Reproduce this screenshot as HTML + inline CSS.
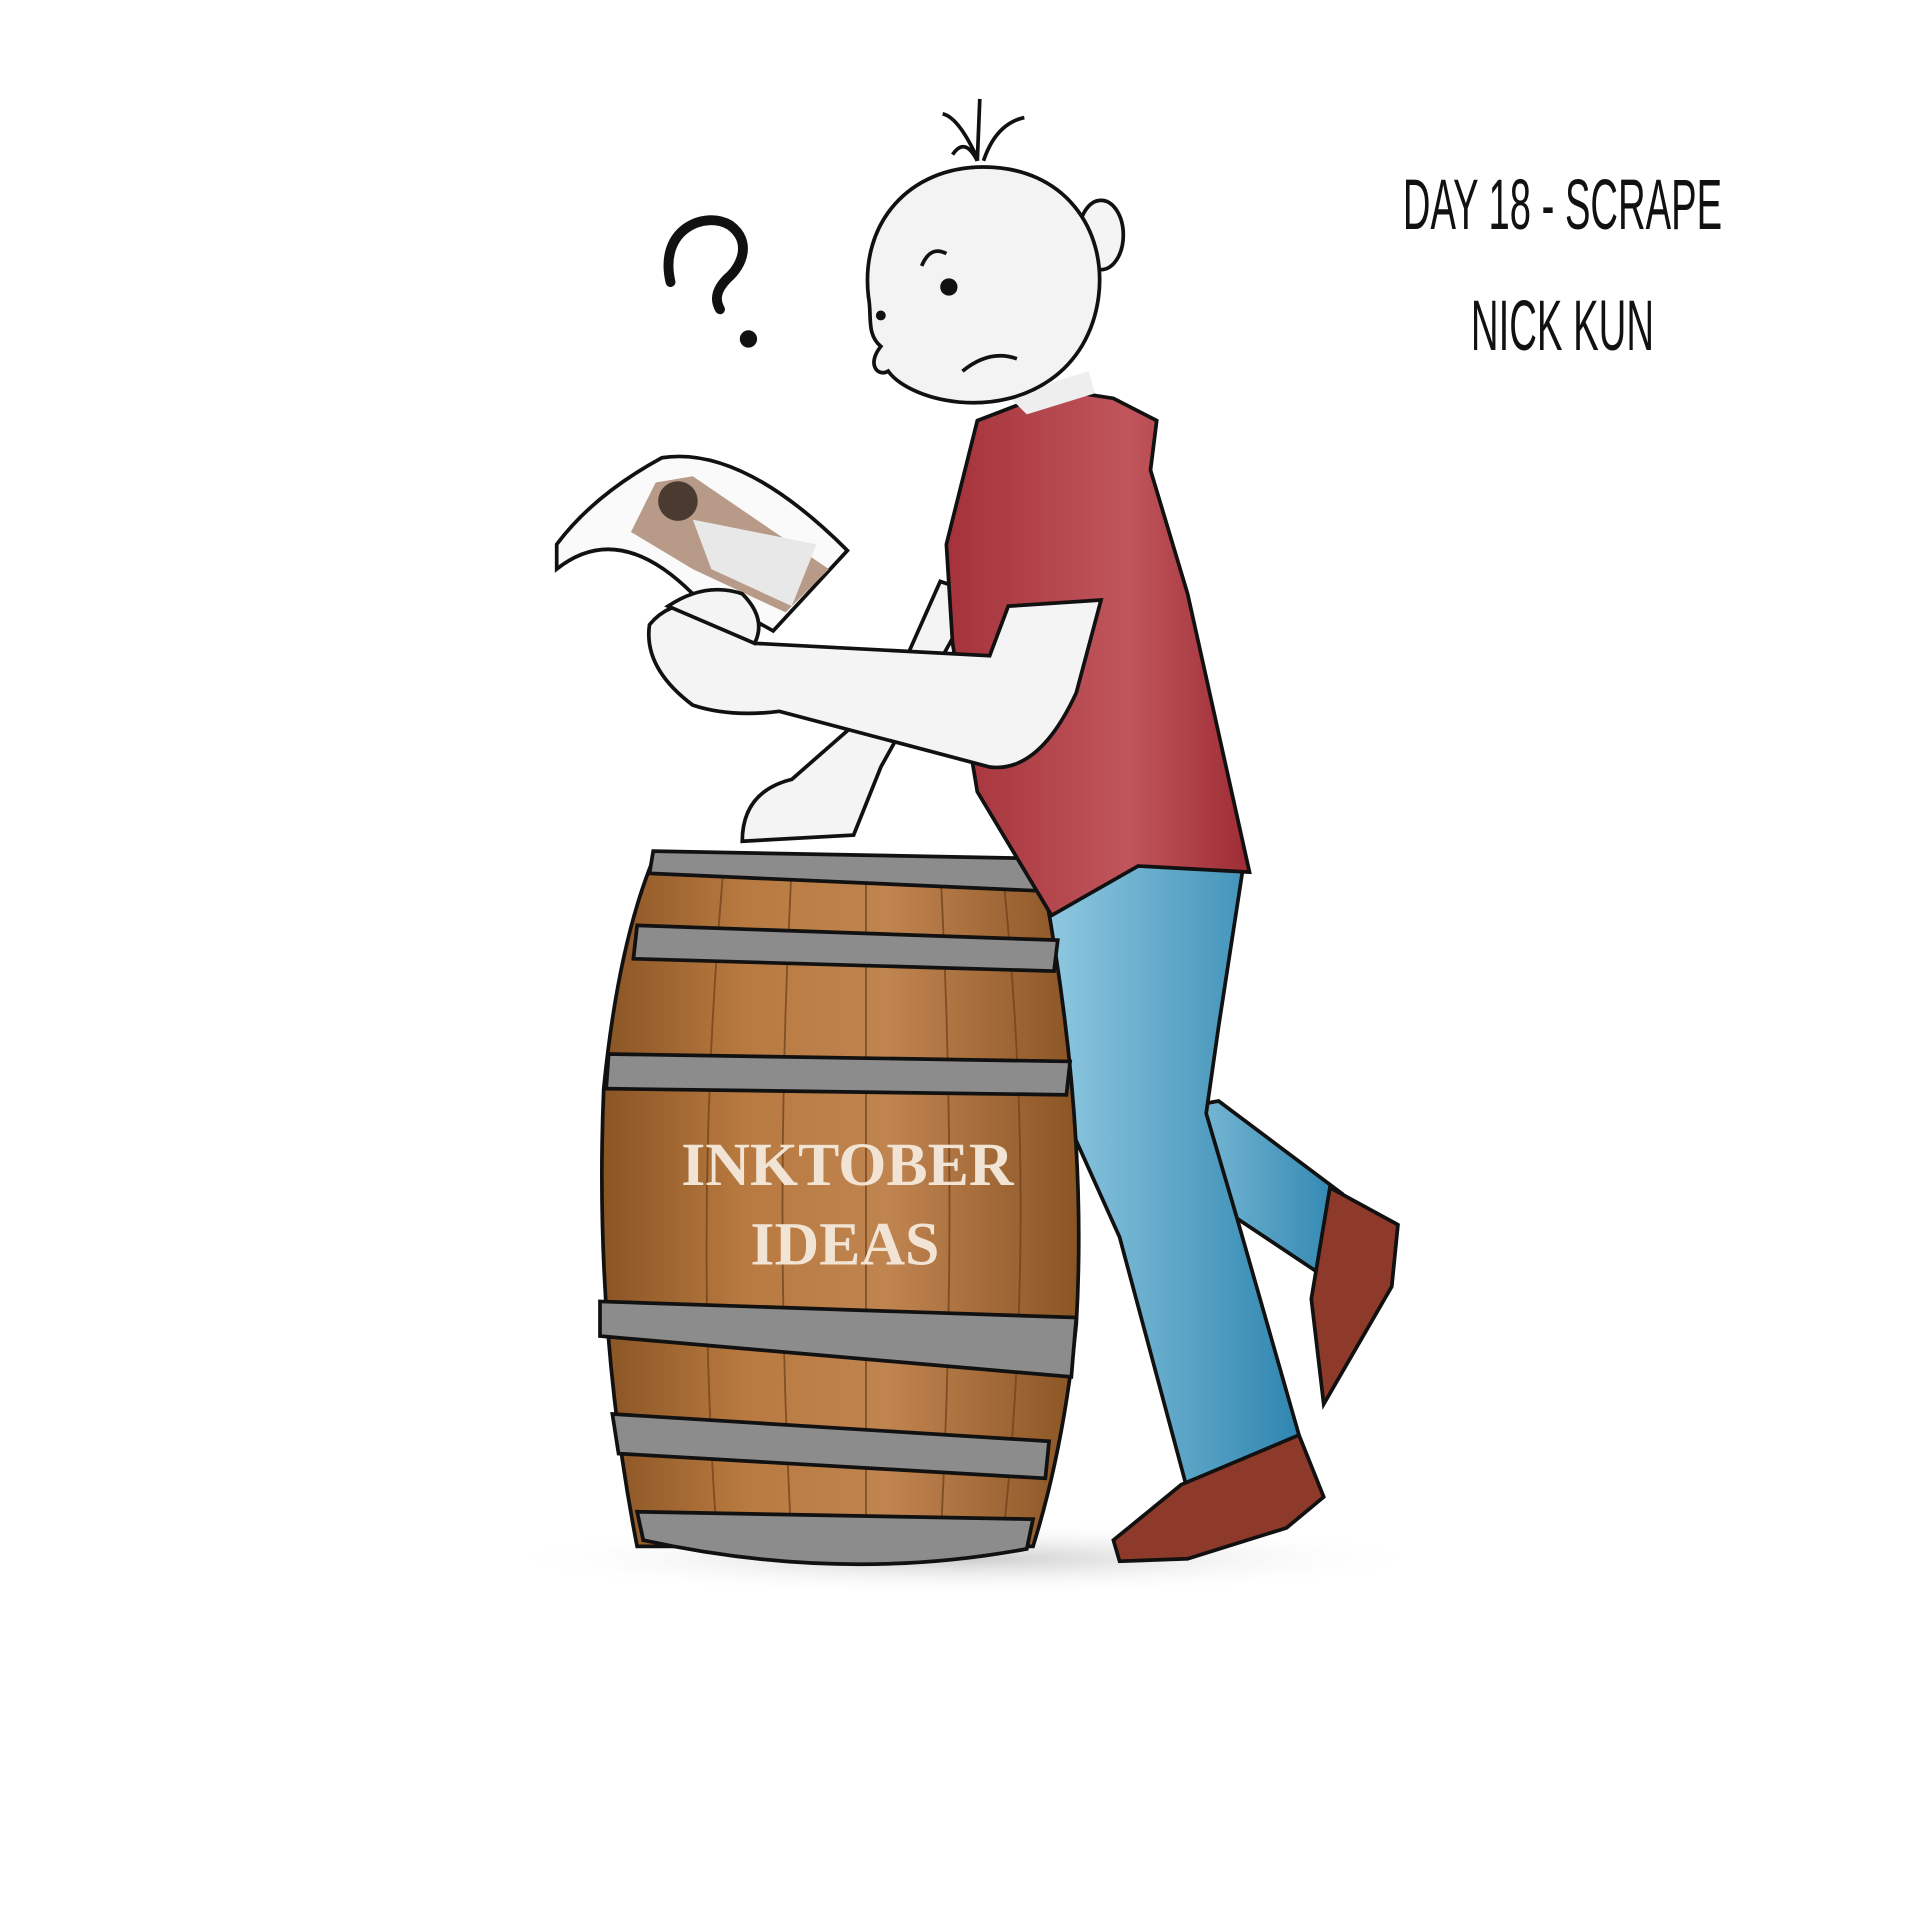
<!DOCTYPE html>
<html><head><meta charset="utf-8"><style>
html,body{margin:0;padding:0;background:#fff;}
svg{display:block;}
</style></head><body>
<svg width="1920" height="1920" viewBox="0 0 1552 1552" xmlns="http://www.w3.org/2000/svg">
<defs>
<linearGradient id="wood" x1="0" x2="1" y1="0" y2="0">
<stop offset="0" stop-color="#8a5424"/><stop offset="0.3" stop-color="#b87a40"/><stop offset="0.6" stop-color="#c08450"/><stop offset="1" stop-color="#8a5424"/>
</linearGradient>
<linearGradient id="jean" x1="0" x2="1"><stop offset="0" stop-color="#8fc8e0"/><stop offset="1" stop-color="#2f86b0"/></linearGradient>
<linearGradient id="shirt" x1="0" x2="1"><stop offset="0" stop-color="#a5323a"/><stop offset="0.6" stop-color="#c0565c"/><stop offset="1" stop-color="#9e2c34"/></linearGradient>
<radialGradient id="sh"><stop offset="0" stop-color="#ccc"/><stop offset="1" stop-color="#fff" stop-opacity="0"/></radialGradient>
</defs>
<ellipse cx="780" cy="1260" rx="380" ry="30" fill="url(#sh)"/>
<path d="M542 228 C532 185 570 170 590 182 C608 195 600 215 588 225 C578 235 578 243 582 250" fill="none" stroke="#111" stroke-width="8" stroke-linecap="round"/>
<circle cx="605" cy="274" r="7" fill="#111"/>
<text x="1263" y="185" font-family="Liberation Sans, sans-serif" font-size="58" text-anchor="middle" fill="#111" textLength="258" lengthAdjust="spacingAndGlyphs">DAY 18 - SCRAPE</text>
<text x="1263" y="283" font-family="Liberation Sans, sans-serif" font-size="58" text-anchor="middle" fill="#111" textLength="148" lengthAdjust="spacingAndGlyphs">NICK KUN</text>
<path d="M930 900 L985 890 L1085 965 L1075 1035 L1000 985 Z" fill="url(#jean)" stroke="#111" stroke-width="3"/>
<path d="M1075 960 L1130 990 L1125 1040 L1070 1135 L1060 1050 Z" fill="#8e3a2a" stroke="#111" stroke-width="3"/>
<path d="M848 740 L855 700 L1005 700 L985 830 L975 900 L1000 985 L1050 1160 L960 1205 L905 1000 L860 900 Z" fill="url(#jean)" stroke="#111" stroke-width="3"/>
<path d="M955 1200 L1050 1160 L1070 1210 L1040 1235 L960 1260 L905 1262 L900 1245 Z" fill="#8e3a2a" stroke="#111" stroke-width="3"/>
<path d="M530 690 L840 695 Q880 900 870 1070 Q860 1170 835 1250 L515 1250 Q480 1070 488 880 Q500 760 530 690 Z" fill="url(#wood)" stroke="#111" stroke-width="3"/>
<g stroke="#6b3e18" stroke-width="1.5" fill="none" opacity="0.7">
<path d="M585 700 Q560 980 580 1250"/><path d="M640 700 Q625 980 640 1250"/><path d="M700 700 Q700 980 700 1250"/><path d="M760 700 Q775 980 760 1250"/><path d="M810 700 Q840 980 810 1250"/>
</g>
<g fill="#8c8c8c" stroke="#111" stroke-width="3">
<path d="M528 688 L842 694 L838 720 L525 706 Z"/>
<path d="M515 748 L855 760 L852 785 L512 775 Z"/>
<path d="M492 852 L865 858 L862 885 L490 880 Z"/>
<path d="M485 1052 L870 1065 L866 1113 L485 1080 Z"/>
<path d="M495 1143 L848 1165 L845 1195 L500 1175 Z"/>
<path d="M515 1222 L835 1228 L830 1252 Q680 1280 520 1245 Z"/>
</g>
<text x="685" y="958" font-family="Liberation Serif, serif" font-weight="bold" font-size="50" text-anchor="middle" fill="#f1e4d4">INKTOBER</text>
<text x="683" y="1022" font-family="Liberation Serif, serif" font-weight="bold" font-size="50" text-anchor="middle" fill="#f1e4d4">IDEAS</text>
<path d="M720 560 L760 470 L790 480 L712 620 L690 675 L600 680 Q600 640 640 630 Z" fill="#f4f4f4" stroke="#111" stroke-width="3"/>
<path d="M790 340 L855 315 L900 322 L935 340 L930 380 L960 480 L1010 705 L920 700 L850 740 L790 640 L770 520 L765 440 Z" fill="url(#shirt)" stroke="#111" stroke-width="3"/>
<path d="M815 320 L880 300 L885 318 L830 335 Z" fill="#eee"/>
<path d="M610 520 L800 530 L815 490 L890 485 L870 560 Q840 625 800 620 L630 575 Q590 580 560 570 Q520 540 525 505 Q545 480 590 490 Z" fill="#f4f4f4" stroke="#111" stroke-width="3"/>
<path d="M450 440 Q480 400 535 370 Q600 360 685 445 L625 510 Q590 490 560 480 Q500 420 450 460 Z" fill="#fafafa" stroke="#111" stroke-width="3"/>
<path d="M530 390 L560 385 L670 460 L635 495 L560 460 L510 430 Z" fill="#b89a88"/>
<path d="M560 420 L660 440 L640 490 L575 460 Z" fill="#e8e8e8"/>
<circle cx="548" cy="405" r="16" fill="#4a3a30"/>
<path d="M540 490 Q570 470 600 480 Q620 500 610 520 Z" fill="#f4f4f4" stroke="#111" stroke-width="3"/>
<path d="M770 125 Q780 110 790 130 M790 130 L792 80 M795 130 Q805 100 828 95 M790 128 Q775 95 762 92" fill="none" stroke="#111" stroke-width="3"/>
<ellipse cx="890" cy="190" rx="18" ry="28" fill="#f4f4f4" stroke="#111" stroke-width="3"/>
<path d="M795 135 C860 135 895 185 888 240 C880 300 830 330 775 325 C745 322 725 310 718 300 C710 305 700 295 712 280 C700 270 705 255 702 240 C695 180 735 135 795 135 Z" fill="#f3f3f3" stroke="#111" stroke-width="3"/>
<circle cx="767" cy="232" r="7" fill="#111"/>
<path d="M745 215 Q752 198 765 205" fill="none" stroke="#111" stroke-width="3"/>
<path d="M778 300 Q800 282 822 290" fill="none" stroke="#111" stroke-width="3"/>
<circle cx="712" cy="255" r="4" fill="#111"/>
</svg>
</body></html>
